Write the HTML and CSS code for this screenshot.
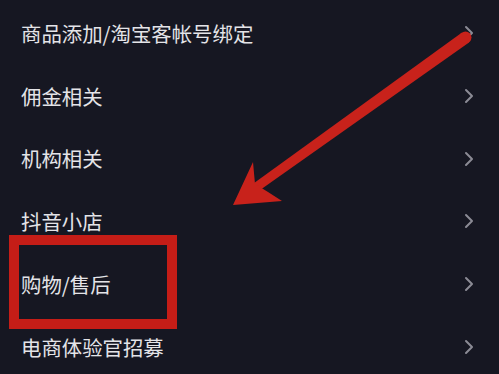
FILE: index.html
```html
<!DOCTYPE html>
<html lang="zh">
<head>
<meta charset="utf-8">
<link rel="stylesheet" href="styles.css">
</head>
<body>
<div class="page">
  <ul class="menu">
    <li class="row"><span class="label">商品添加/淘宝客帐号绑定</span><svg class="chev" viewBox="0 0 10 16"><path d="M2 2 L8 8 L2 14"/></svg></li>
    <li class="row"><span class="label">佣金相关</span><svg class="chev" viewBox="0 0 10 16"><path d="M2 2 L8 8 L2 14"/></svg></li>
    <li class="row"><span class="label">机构相关</span><svg class="chev" viewBox="0 0 10 16"><path d="M2 2 L8 8 L2 14"/></svg></li>
    <li class="row"><span class="label">抖音小店</span><svg class="chev" viewBox="0 0 10 16"><path d="M2 2 L8 8 L2 14"/></svg></li>
    <li class="row"><span class="label">购物/售后</span><svg class="chev" viewBox="0 0 10 16"><path d="M2 2 L8 8 L2 14"/></svg></li>
    <li class="row"><span class="label">电商体验官招募</span><svg class="chev" viewBox="0 0 10 16"><path d="M2 2 L8 8 L2 14"/></svg></li>
  </ul>
  <div class="highlight"></div>
  <svg class="arrow" viewBox="0 0 499 374" width="499" height="374">
    <polygon points="462,32.6 469,42.4 257.6,191.7 252.4,184.3" fill="#c8221b"/>
    <circle cx="465.5" cy="37.5" r="6" fill="#c8221b"/>
    <polygon points="233,205 253,162 255,184 268,192 282,201" fill="#c8221b"/>
  </svg>
</div>
</body>
</html>
```
FILE: styles.css
```css
html, body {
  margin: 0;
  padding: 0;
  background: #161722;
}
.page {
  position: relative;
  width: 499px;
  height: 374px;
  overflow: hidden;
  background: #161722;
  font-family: "Noto Sans CJK SC", "Noto Sans", sans-serif;
}
.menu {
  list-style: none;
  margin: 0;
  padding: 1.6px 0 0 0;
}
.row {
  height: 62.8px;
  display: flex;
  align-items: center;
  justify-content: space-between;
  padding: 0 25px 0 21px;
}
.label {
  color: #e4e4e8;
  font-size: 20.4px;
  line-height: 1;
}
.chev {
  width: 10px;
  height: 16px;
}
.chev path {
  fill: none;
  stroke: #8b8b95;
  stroke-width: 2;
  stroke-linecap: round;
  stroke-linejoin: round;
}
.highlight {
  position: absolute;
  left: 9px;
  top: 235px;
  width: 148px;
  height: 74px;
  border: 10px solid #c51d17;
}
.arrow {
  position: absolute;
  left: 0;
  top: 0;
}
```
